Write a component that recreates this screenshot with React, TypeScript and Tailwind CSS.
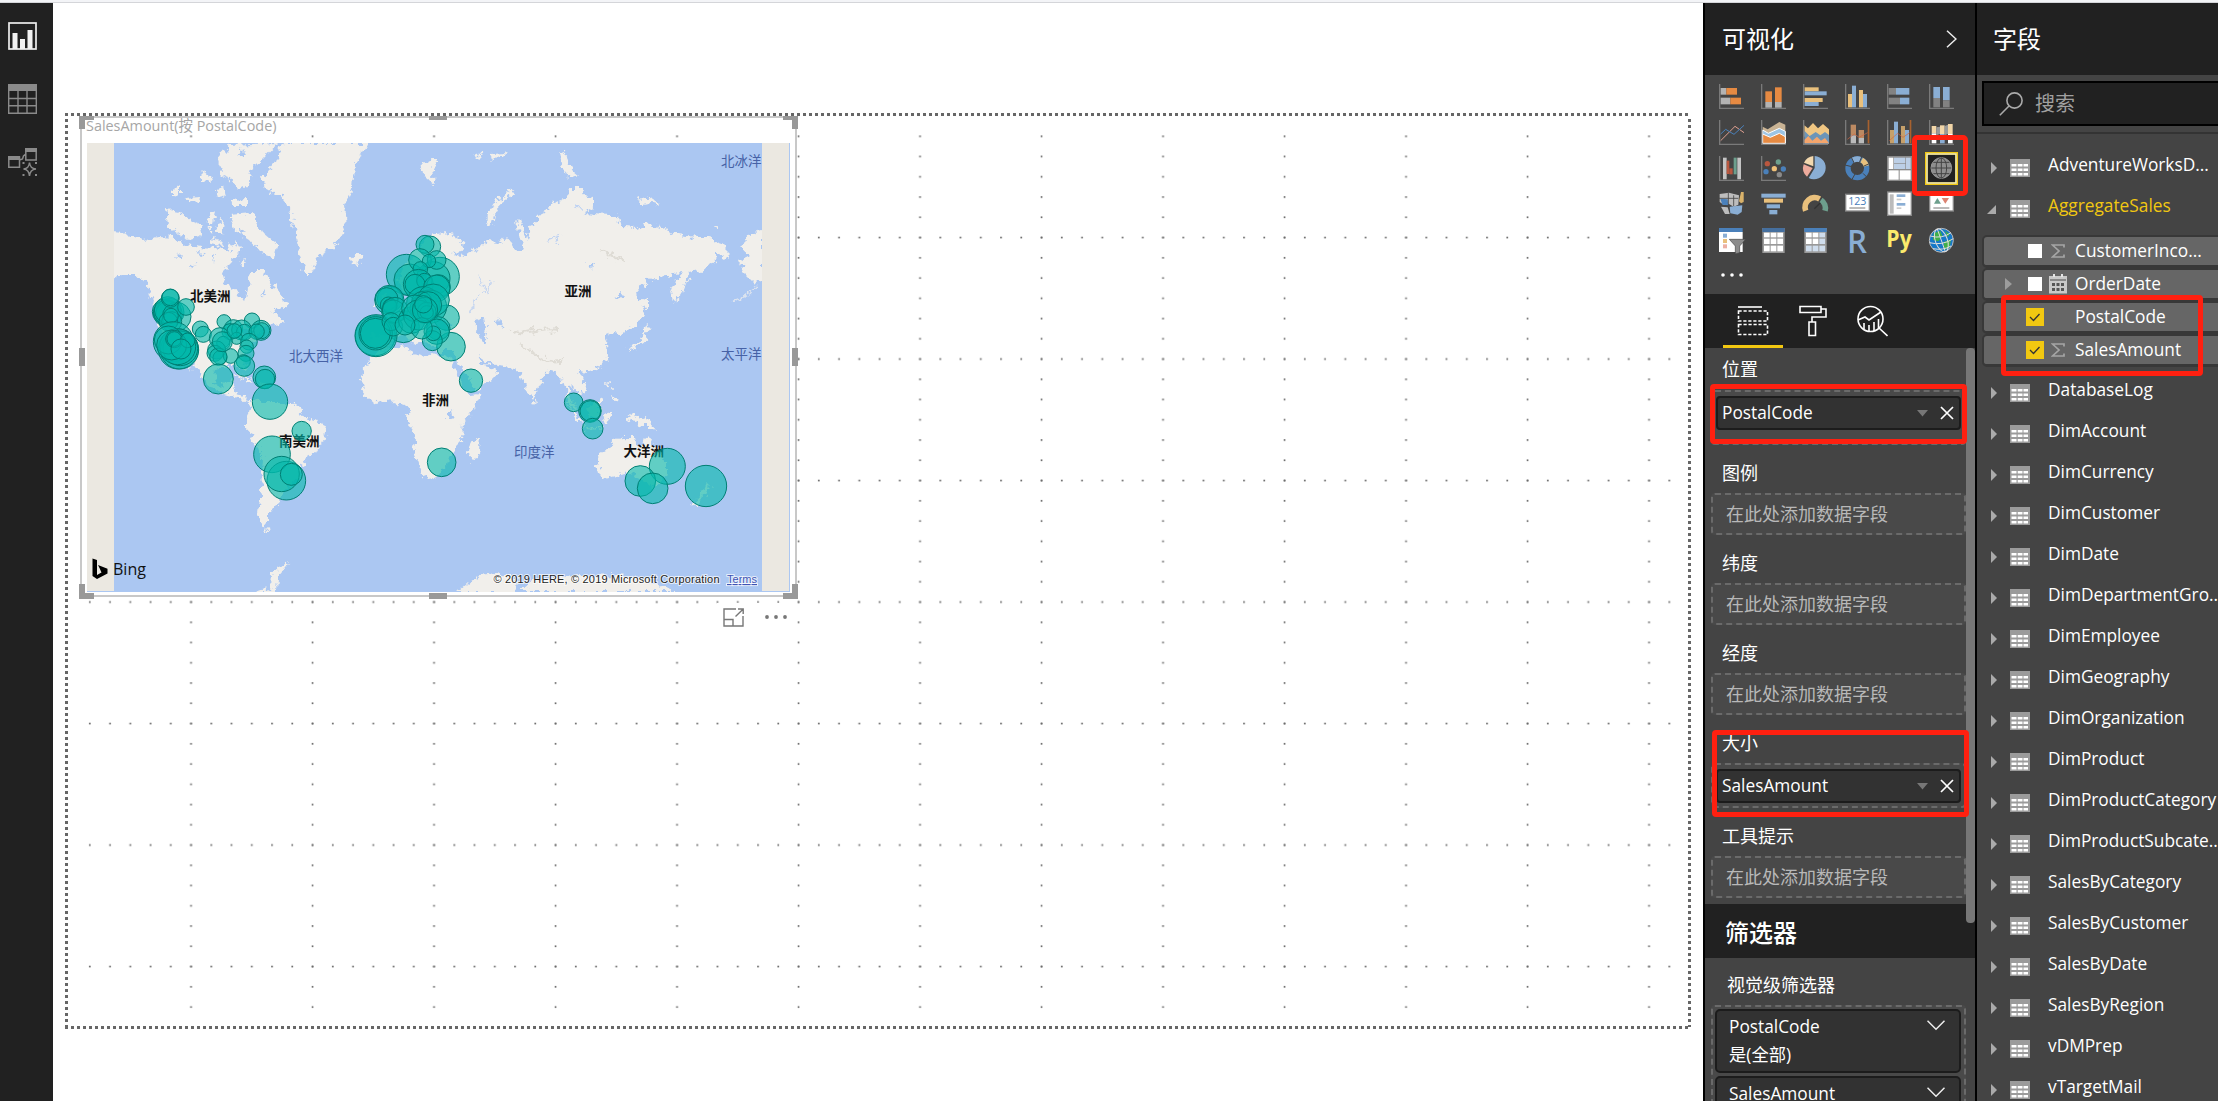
import type { ReactNode } from 'react';

const FONT = "font-['Open_Sans','Noto_Sans_CJK_SC',sans-serif]";

/* ---------- map data ---------- */

const LAND = [
  // North America
  'M114 232L125 233L145 240L158 237L175 238L185 245L200 247L215 248L228 250L235 240L241 250L232 262L222 272L224 284L235 290L245 302L248 288L250 270L262 270L270 282L285 300L288 306L272 312L285 322L275 324L262 328L255 340L246 350L243 360L247 372L240 366L226 366L216 370L214 382L222 388L230 380L235 384L232 392L240 394L245 401L254 399L249 404L242 400L236 396L222 394L208 385L196 366L187 352L193 372L183 358L170 345L160 330L157 312L150 295L147 283L135 275L122 275L114 281Z',
  // Greenland, Iceland
  'M282 143L276 160L262 178L268 192L280 195L290 208L295 232L301 262L306 273L312 273L318 256L335 245L346 226L344 205L353 188L355 165L368 143Z',
  'M351 257L356 254L364 254L365 258L359 263L352 262Z',
  // Arctic Canada
  'M168 210L180 212L190 220L203 225L200 236L188 240L174 230L165 222Z',
  'M218 160L230 145L278 143L262 160L252 168L248 185L238 190L232 180L222 176Z',
  'M230 215L252 213L262 232L277 245L275 258L262 254L250 240L234 230Z',
  'M232 200L246 199L246 206L233 206Z',
  'M172 192L180 186L180 194L172 197Z',
  'M186 197L200 196L199 203L188 202Z',
  'M200 171L208 174L212 182L204 180Z',
  'M208 213L216 210L214 222L209 224ZM218 222L224 220L222 234L216 232ZM216 190L224 188L226 196L218 198Z',
  'M212 238L222 240L220 246L210 244ZM238 262L246 260L244 266ZM206 226L212 228L210 234Z',
  // Cuba and Hispaniola
  'M232 374L243 375L254 382L245 380ZM258 382L268 384L262 387Z',
  // South America
  'M250 404L256 399L262 402L290 402L298 407L303 416L314 420L327 427L324 437L317 451L308 456L303 465L300 475L290 484L283 494L278 501L274 510L268 514L268 522L264 527L259 523L258 513L261 490L263 460L260 450L252 438L246 426L246 420Z',
  'M262 526L270 532L266 532Z',
  // Africa and Madagascar
  'M373 356L377 352L390 348L409 346L411 354L428 357L432 352L450 358L458 377L463 388L470 395L482 394L475 407L463 422L462 441L453 450L448 464L438 477L425 480L418 460L413 450L416 440L408 417L409 410L405 405L390 400L377 404L365 395L361 383L364 368Z',
  'M480 437L479 450L475 460L470 459L469 450L474 440Z',
  // Eurasia
  'M435 233L447 232L463 243L464 252L452 253L458 257L470 252L487 242L502 243L507 237L512 243L517 253L523 250L517 222L520 219L527 240L530 226L538 222L538 215L548 210L552 203L567 197L573 188L583 188L585 195L593 197L593 207L583 213L607 215L617 215L623 227L637 228L647 223L660 227L677 235L697 237L710 237L722 245L730 253L725 258L715 252L717 260L703 270L690 273L683 290L675 303L671 290L675 280L684 272L673 273L667 278L647 280L635 295L642 302L644 313L636 326L628 328L622 335L612 334L604 337L607 343L608 357L600 368L587 373L579 371L586 387L582 395L573 388L568 384L571 398L578 411L570 404L563 383L555 370L548 372L540 383L532 399L525 387L521 373L512 370L507 366L497 365L487 362L477 356L482 365L490 366L498 372L493 378L482 387L475 391L469 380L462 367L455 358L453 350L440 350L430 348L424 340L414 344L405 333L396 336L386 349L373 350L371 336L386 334L381 319L394 313L406 305L417 300L425 290L404 292L398 280L404 266L420 245Z',
  'M384 314L392 312L391 302L386 292L381 296L385 304ZM373 308L381 306L380 300L374 300Z',
  // Arctic islands of Eurasia
  'M420 166L430 160L438 162L432 168L434 184L428 180Z',
  'M474 156L480 153L482 158ZM490 153L508 152L500 158L492 160Z',
  'M559 152L565 150L568 163L573 172L579 177L572 180L562 168Z',
  'M512 190L514 193L500 204L494 216L491 228L487 227L488 213L496 202Z',
  'M638 197L650 199L656 203L662 206L650 204L642 205ZM713 228L718 226L718 229Z',
  // Alaska at the right edge
  'M762 230L750 233L746 242L740 247L750 256L740 262L744 272L752 280L762 283Z',
  // Japan, Philippines, Indonesia
  'M646 325L652 326L646 333L645 342L636 348L627 350L640 341L644 333ZM640 300L648 298L648 312L645 310Z',
  'M607 381L611 388L608 390ZM613 396L619 399L615 402Z',
  'M566 402L576 412L582 424L577 420ZM586 408L600 400L600 414L592 418ZM603 414L612 412L606 424ZM584 427L600 428L602 430L585 429Z',
  'M627 417L634 415L641 418L652 422L656 430L648 426L642 426L634 421Z',
  // Australia, New Zealand, Sri Lanka
  'M597 455L607 450L615 440L623 437L635 437L636 444L643 447L647 434L651 442L658 450L667 462L667 473L660 484L653 487L646 484L640 478L628 473L618 476L602 480L600 473L597 462Z',
  'M706 483L712 489L702 497L697 507L692 504L702 493ZM535 398L538 403L534 402Z',
  // Antarctica
  'M457 592L467 583L480 575L495 573L517 577L514 592ZM520 592L533 580L553 577L620 575L647 580L678 592ZM253 592L264 588L271 590L272 575L281 565L289 562L277 577L276 592Z',
];

const INLAND_WATER = [
  'M476 320L484 318L486 328L484 334L488 341L484 343L479 336Z',
  'M432 326L440 320L452 324L446 330L436 330Z',
  'M495 320L501 318L500 326ZM586 264L594 264L592 269Z',
  'M240 331L250 327L256 332L246 336Z',
  'M615 296L623 294L622 298ZM448 413L452 409L453 417L448 420Z',
  'M212 255L216 252L214 262ZM190 262L196 266L191 267ZM176 256L184 254L180 260Z',
  'M238 155L243 148L246 160ZM262 287L266 292L263 297ZM196 252L204 253L200 256ZM240 228L246 232L244 236Z',
];

type Bubble = [number, number, number];

const AMERICAS_EUROPE: Bubble[] = [
  [60, 260, 38], [66, 265, 41], [75, 262, 42], [72, 268, 40], [62, 262, 36], [68, 255, 40], [95, 275, 43], [80, 290, 30],
  [70, 290, 28], [76, 220, 27], [76, 217, 25], [123, 246, 25], [78, 272, 22],
  [85, 350, 60], [100, 372, 60], [104, 375, 57], [106, 370, 52], [98, 365, 54], [70, 345, 42], [80, 360, 45],
  [88, 342, 26], [88, 342, 22], [128, 346, 22], [108, 372, 30], [166, 312, 24], [175, 328, 24],
  [237, 290, 21], [321, 287, 23], [265, 312, 28], [255, 320, 24], [290, 315, 30], [298, 322, 24], [348, 316, 30],
  [350, 317, 24], [335, 320, 23], [225, 340, 32], [235, 354, 20], [275, 340, 18], [312, 350, 25], [305, 365, 20],
  [215, 375, 27], [210, 385, 24], [225, 398, 21], [257, 393, 22], [220, 395, 26], [303, 385, 24], [295, 410, 21],
  [232, 350, 30], [268, 318, 22], [298, 423, 31], [220, 462, 45], [358, 457, 34], [360, 462, 29],
  [784, 148, 60], [795, 165, 48], [885, 155, 58], [865, 160, 50], [905, 278, 38], [775, 305, 48], [691, 332, 60],
  [693, 332, 63], [692, 325, 50], [691, 325, 45], [918, 365, 43], [855, 65, 32], [840, 58, 27], [825, 105, 34],
  [875, 105, 28], [852, 108, 20], [826, 132, 22], [820, 178, 45], [838, 168, 23], [810, 178, 30], [880, 185, 36],
  [875, 190, 40], [735, 222, 38], [733, 225, 44], [725, 222, 34], [730, 240, 24], [735, 243, 21], [745, 260, 35],
  [750, 255, 38], [738, 290, 27], [745, 305, 28], [800, 285, 40], [835, 235, 50], [840, 250, 45], [855, 245, 50],
  [865, 225, 48], [830, 230, 30], [850, 240, 40], [810, 250, 40], [820, 270, 45], [845, 260, 28], [845, 262, 20],
  [880, 310, 35], [875, 320, 38], [862, 347, 30], [865, 325, 22], [830, 310, 32], [840, 255, 38], [835, 238, 26],
  [780, 300, 30],
];
const SOUTH: Bubble[] = [
  [630, 185, 53], [725, 273, 29], [636, 343, 55], [679, 422, 58], [665, 402, 53], [694, 403, 33], [1145, 367, 43],
  [1233, 122, 35], [1541, 187, 28], [1590, 213, 34], [1591, 213, 31], [1598, 266, 31], [1822, 379, 54],
  [1741, 423, 46], [1778, 445, 46], [1938, 438, 62],
];

function Bubbles({ items, transform }: { items: Bubble[]; transform: string }) {
  return (
    <g transform={transform} fill="#01b8aa" fillOpacity="0.6" stroke="#007e73" strokeWidth="3">
      {items.map(([x, y, r], i) => (
        <circle key={i} cx={x} cy={y} r={r} />
      ))}
    </g>
  );
}

function WorldMap() {
  return (
    <svg viewBox="87 143 703 449" className="block h-[449px] w-[703px]" fontFamily="'Noto Sans CJK SC', sans-serif">
      <defs>
        <filter id="coast" x="-5%" y="-5%" width="110%" height="110%">
          <feTurbulence type="fractalNoise" baseFrequency="0.16" numOctaves="3" seed="4" result="n" />
          <feDisplacementMap in="SourceGraphic" in2="n" scale="11" xChannelSelector="R" yChannelSelector="G" />
        </filter>
        <clipPath id="sea"><rect x="114" y="143" width="648" height="449" /></clipPath>
      </defs>
      <rect x="87" y="143" width="703" height="449" fill="#abc7f2" />
      <rect x="87" y="143" width="27" height="448" fill="#ebe8e1" />
      <g clipPath="url(#sea)">
        <g filter="url(#coast)">
          <path d="M60 250L114 232L114 281L60 280Z" fill="#f1efeb" />
          {LAND.map((d, i) => <path key={i} d={d} fill="#f1efeb" />)}
          {INLAND_WATER.map((d, i) => <path key={i} d={d} fill="#abc7f2" />)}
          <path d="M757 287L745 296L732 301" stroke="#dde4ef" strokeWidth="1.5" fill="none" />
          <path d="M520 345Q530 350 540 357T565 360M530 332Q545 328 560 330M512 333L535 328M600 250L625 262" stroke="#dedbd4" strokeWidth="2" fill="none" />
          <path d="M478 278L486 290L476 300L470 314M492 280L488 294" stroke="#c6d6f0" strokeWidth="1.5" fill="none" />
          <path d="M548 240L560 236L556 244M572 207L584 208" stroke="#c0d3f2" strokeWidth="1.5" fill="none" />
        </g>
      </g>
      <rect x="762" y="143" width="27" height="448" fill="#ebe8e1" />
      <g fill="#111" fontSize="13.5" fontWeight="700">
        <text x="190" y="301">北美洲</text>
        <text x="564.500" y="296">亚洲</text>
        <text x="422" y="405">非洲</text>
        <text x="279" y="446">南美洲</text>
        <text x="623.500" y="456">大洋洲</text>
      </g>
      <g fill="#4662a6" fontSize="13.5">
        <text x="289" y="361">北大西洋</text>
        <text x="721" y="166">北冰洋</text>
        <text x="721" y="359">太平洋</text>
        <text x="514" y="457">印度洋</text>
      </g>
      <Bubbles items={AMERICAS_EUROPE} transform="translate(145 225) scale(0.33333)" />
      <Bubbles items={SOUTH} transform="translate(60 340) scale(0.33333)" />
      <path d="M92.500 558.500L97 560V575L101.500 572.500L99.500 568L98 565L107.500 568.800V573.500L97 579L92.500 576Z" fill="#000" />
      <text x="113" y="575" fontSize="17" textLength="33" lengthAdjust="spacingAndGlyphs" fontFamily="'Open Sans', sans-serif" fill="#111">Bing</text>
      <g fontFamily="'Liberation Sans', sans-serif" fontSize="11" stroke="#fff" strokeOpacity="0.7" strokeWidth="2" paintOrder="stroke">
        <text x="493.500" y="583" textLength="226" fill="#222">© 2019 HERE, © 2019 Microsoft Corporation</text>
        <text x="727" y="583" textLength="30" fill="#3f54b5" textDecoration="underline">Terms</text>
      </g>
    </svg>
  );
}

/* ---------- report canvas ---------- */

function CanvasGrid() {
  const ticks = [0, 20.25, 40.5, 60.75, 81, 101.25];
  return (
    <svg className="absolute inset-0 h-full w-full" viewBox="53 3 1650 1098">
      <defs>
        <pattern id="grid" x="67" y="114.500" width="121.500" height="121.500" patternUnits="userSpaceOnUse">
          {ticks.map((t) => (
            <g key={t} fill="#6a6a6a">
              <rect x={t + 1.7} y="0.700" width="1.700" height="1.700" />
              <rect x="1.700" y={t + 0.7} width="1.700" height="1.700" />
            </g>
          ))}
        </pattern>
      </defs>
      <rect x="72" y="118" width="1614" height="905" fill="url(#grid)" />
      <g stroke="#666" strokeWidth="3" strokeDasharray="3 3">
        <path d="M65 114.500H1691M65 1027.500H1691M66.500 119V1027M1689.500 119V1027" />
      </g>
    </svg>
  );
}

function ReportCanvas() {
  return (
    <main className="relative w-[1650px] shrink-0 bg-white">
      <CanvasGrid />
      <section className="absolute left-[27px] top-[113px] h-[481px] w-[717px]">
        <div className="absolute inset-0 border-2 border-[#c8c8c8]" />
        <div className="flex h-full flex-col pl-[7px]">
          <h2 className={`${FONT} -ml-px h-[27px] w-[192px] whitespace-nowrap text-[14.4px] leading-[20px] text-[#a6a6a6]`}>SalesAmount(按 PostalCode)</h2>
          <WorldMap />
        </div>
        <svg className="absolute -left-px top-0 h-[483px] w-[720px]" viewBox="0 0 720 483" fill="#999">
          <path d="M0 0H15V4H6V13H0ZM704 0H719V13H713V4H704ZM0 468H6V477H15V483H0ZM713 468H719V483H704V477H713ZM350 0H368V4H350ZM350 477H368V483H350ZM0 232H6V250H0ZM713 232H719V250H713Z" />
        </svg>
      </section>
      <div className="absolute left-[664px] top-[600px] flex h-[28px] w-[78px] items-center gap-[21px] bg-white pl-[6px]">
        <svg viewBox="0 0 21 19" className="h-[19px] w-[21px]" fill="none" stroke="#777" strokeWidth="1.400">
          <path d="M13 1H1V18H20V8M1 11.500H10V18M12.500 8.500L20 1.300M15 1H20.200V6" />
        </svg>
        <svg viewBox="0 0 22 4" className="h-1 w-[22px]" fill="#777">
          <circle cx="2" cy="2" r="1.900" /><circle cx="11" cy="2" r="1.900" /><circle cx="20" cy="2" r="1.900" />
        </svg>
      </div>
    </main>
  );
}

/* ---------- left rail ---------- */

function Rail() {
  return (
    <nav className="flex w-[53px] shrink-0 flex-col gap-[34px] bg-[#212121] pl-2 pt-[19px]">
      <svg viewBox="0 0 29 28" className="h-7 w-[29px]">
        <rect x="1" y="1" width="27" height="26" fill="none" stroke="#eee" strokeWidth="1.700" />
        <path d="M4.500 11H9.500V27H4.500ZM12 17H17V27H12ZM19.500 8H24.500V27H19.500Z" fill="#f2f2f2" />
      </svg>
      <svg viewBox="0 0 29 30" className="h-[30px] w-[29px]">
        <path d="M0 0H29V7H0Z" fill="#8a8a8a" />
        <path d="M.7 7V29.300H28.300V7M.7 14.500H28.300M.7 21.800H28.300M10 7V29M19 7V29" fill="none" stroke="#8a8a8a" strokeWidth="1.400" />
      </svg>
      <svg viewBox="0 0 30 29" className="h-[29px] w-[30px]" fill="none" stroke="#8a8a8a" strokeWidth="1.500">
        <path d="M.8 9V19.300H11.500V9ZM17.800 1V12H28.200V1ZM11.500 12L14.500 11L15.500 8L17.800 6" />
        <path d="M0 8H12V12H0ZM17 0H29V4H17Z" fill="#8a8a8a" stroke="none" />
        <path d="M21.500 14.500Q22 20.500 28 21Q22 21.500 21.500 28Q21 21.500 15.500 21Q21 20.500 21.500 14.500Z" />
        <path d="M14.500 14h2v2h-2ZM27 14h2v2h-2ZM14.500 26h2v2h-2ZM27 26h2v2h-2Z" fill="#8a8a8a" stroke="none" />
      </svg>
    </nav>
  );
}

/* ---------- visual type icons ---------- */

const OR = '#e68a42', GR = '#b3b3b3', BL = '#8aaed4', YE = '#e9c07c', DG = '#828282', DB = '#4a80ba', GN = '#6d9f8d', RD = '#b9573f', AX = '#7a7a7a';

function Bars({ b }: { b: [number, number, number, number, string][] }) {
  return <>{b.map(([x, y, w, h, f], i) => <rect key={i} x={x} y={y} width={w} height={h} fill={f} />)}</>;
}
const Axis = () => <path d="M2 0V73H75" fill="none" stroke={AX} strokeWidth="4" />;

const VISUALS: ReactNode[] = [
  <><Axis /><Bars b={[[5, 12, 17, 20, GR], [22, 12, 32, 20, OR], [5, 41, 29, 20, GR], [34, 41, 32, 20, OR]]} /></>,
  <><Axis /><Bars b={[[13, 22, 20, 32, OR], [13, 54, 20, 17, GR], [42, 10, 20, 44, OR], [42, 54, 20, 17, GR]]} /></>,
  <><Axis /><Bars b={[[5, 10, 42, 12, YE], [5, 22, 66, 12, BL], [5, 42, 54, 12, YE], [5, 54, 42, 12, BL]]} /></>,
  <><Axis /><Bars b={[[9, 30, 12, 40, YE], [21, 5, 12, 65, BL], [42, 18, 12, 52, YE], [54, 30, 12, 40, BL]]} /></>,
  <><Axis /><Bars b={[[5, 12, 22, 20, DG], [27, 12, 40, 20, BL], [5, 41, 34, 20, DG], [39, 41, 28, 20, BL]]} /></>,
  <><Axis /><Bars b={[[13, 9, 20, 33, BL], [13, 42, 20, 28, DG], [42, 9, 20, 40, BL], [42, 49, 20, 21, DG]]} /></>,

  <><Axis /><path d="M5 62L48 19L75 38" fill="none" stroke="#e0a091" strokeWidth="3" /><path d="M5 42L20 28L45 43L75 16" fill="none" stroke={DB} strokeWidth="3" /></>,
  <><path d="M5 20L20 28L55 6L73 14V70H5Z" fill="#c9b394" /><path d="M5 30L22 40L55 25L73 34V70H5Z" fill="#9cc4e4" stroke="#fff" strokeWidth="3" /><path d="M5 42L28 52L55 40L73 50V70H5Z" fill={OR} stroke="#fff" strokeWidth="3" /><Axis /></>,
  <><path d="M4 16L15 25L30 9L45 25L60 12L78 28V50H4Z" fill="#f0c682" /><path d="M4 32L20 48L38 36L52 46L66 36L78 45V72H4Z" fill="#6c95b8" /><path d="M4 60L16 48L28 62L42 50L54 62L66 54L78 70H4Z" fill="#f4a56c" /><Axis /></>,
  <><Axis /><Bars b={[[17, 14, 16, 32, '#bd8a62'], [17, 46, 16, 24, '#bbb'], [41, 30, 16, 24, '#bd8a62'], [41, 54, 16, 16, '#bbb'], [68, 0, 5, 70, '#a8622f']]} /><path d="M7 58L28 42L42 52L68 38" fill="none" stroke="#d2643f" strokeWidth="2" /></>,
  <><Axis /><Bars b={[[9, 30, 12, 40, '#c6a06a'], [21, 5, 12, 65, BL], [42, 18, 12, 52, '#c6a06a'], [54, 30, 12, 40, BL], [68, 0, 5, 70, '#a8622f']]} /><path d="M7 62L32 40L48 52L68 38" fill="none" stroke="#d2643f" strokeWidth="2" /></>,
  <><Axis /><Bars b={[[8, 18, 14, 22, '#f2d6a8'], [8, 40, 14, 30, '#fff'], [33, 16, 14, 26, '#f2d6a8'], [33, 42, 14, 28, BL], [57, 12, 14, 30, '#f2d6a8'], [57, 42, 14, 28, '#fff']]} /><path d="M22 22L33 20V42L22 46ZM47 18L57 14V42L47 46Z" fill="#999" /></>,

  <><Bars b={[[12, 5, 11, 65, '#c4c4c4'], [23, 14, 8, 40, RD], [31, 37, 10, 18, RD], [44, 5, 9, 50, GN], [55, 5, 11, 65, '#c4c4c4']]} /><Axis /></>,
  <><Axis /><circle cx="19" cy="23" r="8" fill={RD} /><circle cx="52" cy="18" r="8" fill={GN} /><circle cx="15" cy="47" r="8" fill={DB} /><circle cx="40" cy="38" r="8" fill="#f0c078" /><circle cx="67" cy="39" r="8" fill={DB} /><circle cx="55" cy="56" r="8" fill="#8a8a8a" /></>,
  <><path d="M35 36V0A35 35 0 1 1 17 66Z" fill={BL} /><path d="M31 31V0A36 36 0 0 0 3 20Z" fill="#f2d8ae" /><path d="M29 36L2 25A34 34 0 0 0 12 62Z" fill="#ecaa9c" /></>,
  <g fill="none" strokeWidth="16"><circle cx="37" cy="37" r="28" stroke={DB} /><path d="M23 13A28 28 0 0 1 47 11" stroke={BL} /><path d="M50 12A28 28 0 0 1 64 30" stroke={YE} /><g stroke="#444" strokeWidth="3"><path d="M28 22L17 0M43 20L51 0M55 31L75 22M54 52L66 64M30 54L20 72M20 32L0 27" /></g></g>,
  <><rect width="75" height="75" fill="#8a8a8a" /><Bars b={[[5, 5, 14, 34, '#fff'], [21, 5, 34, 17, '#bccfe6'], [21, 24, 34, 15, '#bccfe6'], [57, 5, 14, 34, '#bccfe6'], [5, 43, 30, 28, '#fff'], [38, 43, 33, 28, '#fff']]} /></>,
  <g fill="none"><rect x="-10" y="-10" width="95" height="95" fill="#212121" stroke="#f2c811" strokeWidth="4" /><rect x="-6" y="-6" width="87" height="87" stroke="#fff3a6" strokeWidth="5" /><circle cx="37" cy="36" r="31" fill="#8f8f8f" stroke="#999" strokeWidth="3" /><g stroke="#444" strokeWidth="3"><ellipse cx="37" cy="36" rx="16" ry="30" /><path d="M37 5V67M7 36H67M13 19H61M13 53H61" /></g></g>,

  <><path d="M2 6L30 2L60 10L58 38L44 44L30 36L14 38L2 30Z" fill="#bdbdbd" /><path d="M4 20L26 22L28 40L10 38Z" fill={DB} /><path d="M32 44L70 40L68 60L56 68L34 64Z" fill={BL} /><path d="M66 0H74V30L66 34L60 28Z" fill="#d9b26a" /><path d="M6 44L26 46L32 66H18Z" fill="#bdbdbd" /><path d="M0 19H58M28 2V38M2 41L34 42M44 10V42" stroke="#444" strokeWidth="2.500" fill="none" /></>,
  <Bars b={[[1, 5, 73, 12, BL], [9, 20, 57, 12, YE], [17, 37, 40, 12, BL], [25, 54, 24, 13, BL]]} />,
  <g fill="none" strokeWidth="17"><path d="M8 56A29 29 0 0 1 50 21" stroke={YE} /><path d="M54 24A29 29 0 0 1 66 56" stroke={GN} /><path d="M34 50L52 32" stroke="#333" strokeWidth="4" /></g>,
  <><rect x="2" y="7" width="71" height="50" fill="#fff" stroke="#888" strokeWidth="4" /><text x="37" y="38" textAnchor="middle" fontSize="32" fontFamily="Open Sans" fill={DB}>123</text><path d="M13 48H61" stroke="#777" strokeWidth="3" /></>,
  <><rect x="2" y="0" width="71" height="70" fill="#fff" stroke="#888" strokeWidth="4" /><Bars b={[[8, 7, 12, 58, '#bbb'], [29, 7, 26, 8, BL], [29, 20, 14, 5, '#ccc'], [29, 33, 26, 8, BL], [29, 46, 14, 5, '#ccc']]} /></>,
  <><rect x="2" y="7" width="71" height="50" fill="#fff" stroke="#888" strokeWidth="4" /><path d="M15 35L25 18L36 35Z" fill={GN} /><path d="M38 18H60L49 35Z" fill="#dc8371" /><path d="M13 48H61" stroke="#777" strokeWidth="3" /></>,

  <><Bars b={[[0, 0, 71, 12, DB], [0, 12, 71, 60, '#fff'], [12, 17, 12, 12, BL], [12, 33, 12, 12, YE], [12, 49, 12, 12, '#ecb0a4']]} /><path d="M31 34H80L62 54V74L49 78V54Z" fill="#8c8c8c" stroke="#444" strokeWidth="2" /></>,
  <><Bars b={[[4, 0, 67, 75, '#999'], [4, 0, 67, 12, '#456f9e'], [9, 14, 17, 14, '#fff'], [29, 14, 17, 14, '#fff'], [49, 14, 17, 14, '#fff'], [9, 32, 17, 16, '#fff'], [29, 32, 17, 16, '#fff'], [49, 32, 17, 16, '#fff'], [9, 53, 17, 17, '#fff'], [29, 53, 17, 17, '#fff'], [49, 53, 17, 17, '#fff']]} /></>,
  <><Bars b={[[4, 0, 67, 75, '#999'], [4, 0, 67, 12, DB], [9, 14, 17, 14, '#fff'], [29, 14, 17, 14, '#fff'], [49, 14, 17, 14, '#cfdded'], [9, 32, 17, 16, '#fff'], [29, 32, 17, 16, '#fff'], [49, 32, 17, 16, '#cfdded'], [9, 53, 17, 17, '#cfdded'], [29, 53, 17, 17, '#cfdded'], [49, 53, 17, 17, '#cfdded']]} /></>,
  <text x="6" y="74" fontSize="98" fontWeight="600" textLength="60" lengthAdjust="spacingAndGlyphs" fontFamily="Open Sans" fill={BL}>R</text>,
  <text x="-2" y="56" fontSize="68" fontWeight="700" textLength="76" lengthAdjust="spacingAndGlyphs" fontFamily="Open Sans" fill="#fcea6c">Py</text>,
  <><circle cx="37" cy="37" r="36" fill="#1678c8" /><path d="M14 16L34 8L40 24L28 40L12 36ZM44 42L66 34L62 58L46 66ZM48 8L62 18L56 28Z" fill="#3fae49" /><g fill="none" stroke="#ddd" strokeWidth="3"><circle cx="37" cy="37" r="36" stroke="#bbb" /><ellipse cx="37" cy="37" rx="18" ry="36" transform="rotate(-20 37 37)" /><path d="M4 24Q38 34 66 14M1 44Q40 54 73 32M12 62Q42 68 66 54M25 3L49 71" /></g></>,
];

function VisualGallery() {
  return (
    <div className="h-[219px] shrink-0 bg-[#444] pl-[14px] pt-[9px]">
      <div className="grid auto-rows-[36px] grid-cols-[repeat(6,42px)]">
        {VISUALS.map((v, i) => (
          <svg key={i} viewBox="0 0 75 75" className="h-[25px] w-[25px] overflow-visible">{v}</svg>
        ))}
      </div>
      <svg viewBox="0 0 24 4" className="ml-px mt-[9px] h-1 w-6" fill="#fff">
        <circle cx="3" cy="2" r="1.800" /><circle cx="12" cy="2" r="1.800" /><circle cx="21" cy="2" r="1.800" />
      </svg>
    </div>
  );
}

/* ---------- visualizations pane ---------- */

function PaneTabs() {
  return (
    <div className="relative flex h-[54px] shrink-0 bg-[#212121] pl-[32px] pt-[11px]">
      <svg viewBox="0 0 32 32" className="h-8 w-8" fill="none" stroke="#fff" strokeWidth="1.600">
        <path d="M1 2H25" /><path d="M1.500 6H30.500V16H1.500ZM1.500 19.500H30.500V29.500H1.500Z" strokeDasharray="3.200 1.800" />
      </svg>
      <svg viewBox="0 0 28 32" className="ml-[30px] h-8 w-7" fill="none" stroke="#fff" strokeWidth="1.600">
        <path d="M1 1.500H22V7.500H1ZM22 4H27V12H13V17M10 17H16.500V30.500H10Z" />
      </svg>
      <svg viewBox="0 0 31 32" className="ml-[30px] h-8 w-[31px]" fill="none" stroke="#fff" strokeWidth="1.600">
        <circle cx="13.500" cy="14" r="12.500" /><path d="M22 23L30.500 31M1 15L8 12L12 15L24 7M7 18V24M12 20V26M17 17V26M21.500 14V23" />
      </svg>
      <div className="absolute bottom-0 left-[18px] h-[3px] w-[60px] bg-[#f2c811]" />
    </div>
  );
}

function Label({ children, first }: { children: ReactNode; first?: boolean }) {
  return <div className={first ? 'flex h-[42px] items-center pl-[17px] text-[18px]' : 'flex h-12 items-center pl-[17px] pt-2 text-[18px]'}>{children}</div>;
}
function EmptyWell() {
  return (
    <div className="ml-1.5 flex h-[42px] w-[255px] items-center rounded-[4px] border-2 border-dashed border-[#6a6a6a] bg-[#494949] pl-[13px] text-[18px] text-[#b8b8b8]">
      在此处添加数据字段
    </div>
  );
}
function FilledWell({ name, tall }: { name: string; tall?: boolean }) {
  return (
    <div className={tall ? 'ml-1.5 h-[55px] w-[255px] rounded-[4px] border-2 border-dashed border-[#6a6a6a] bg-[#494949] pl-[3px] pt-1' : 'ml-1.5 h-[45px] w-[255px] rounded-[4px] border-2 border-dashed border-[#6a6a6a] bg-[#494949] pl-[3px] pt-1'}>
      <div className="flex h-[34px] w-[245px] items-center rounded-[4px] border-2 border-[#1c1c1c] bg-[#323232] pl-1 pr-[5px]">
        <span className="grow">{name}</span>
        <svg viewBox="0 0 11 7" className="mr-3 h-[7px] w-[11px]"><path d="M0 0H11L5.500 6.500Z" fill="#777" /></svg>
        <svg viewBox="0 0 14 14" className="h-[14px] w-[14px]"><path d="M1 1L13 13M13 1L1 13" stroke="#fff" strokeWidth="1.700" /></svg>
      </div>
    </div>
  );
}
const Chevron = () => (
  <svg viewBox="0 0 18 11" className="mt-[7px] h-[11px] w-[18px] shrink-0" fill="none" stroke="#eee" strokeWidth="1.500"><path d="M.5 .8L9 9.300L17.500 .8" /></svg>
);

function VisualizationsPane() {
  return (
    <aside className="relative flex w-[274px] shrink-0 flex-col overflow-hidden border-l-2 border-r-2 border-black bg-[#444] text-[17.3px] text-white">
      <header className="flex h-[72px] shrink-0 items-center justify-between bg-[#212121] pl-[17px] pr-[18px] text-[24px]">
        <span>可视化</span>
        <svg viewBox="0 0 11 18" className="h-[18px] w-[11px]" fill="none" stroke="#eee" strokeWidth="1.500"><path d="M1 .8L10 9L1 17.200" /></svg>
      </header>
      <VisualGallery />
      <PaneTabs />
      <div className="flex h-[556px] shrink-0 flex-col leading-[22px]">
        <Label first>位置</Label>
        <FilledWell name="PostalCode" tall />
        <Label>图例</Label>
        <EmptyWell />
        <Label>纬度</Label>
        <EmptyWell />
        <Label>经度</Label>
        <EmptyWell />
        <Label>大小</Label>
        <FilledWell name="SalesAmount" />
        <Label>工具提示</Label>
        <EmptyWell />
      </div>
      <div className="flex h-[54px] shrink-0 items-center bg-[#212121] pl-[20px] pt-1 text-[24px] font-medium">筛选器</div>
      <div className="flex h-[47px] shrink-0 items-center pl-[22px] pt-2 text-[18px]">视觉级筛选器</div>
      <div className="ml-1.5 flex w-[255px] shrink-0 flex-col gap-[3px] rounded-t-[4px] border-2 border-dashed border-[#6a6a6a] bg-[#494949] pl-[2px] pt-[2px]">
        <div className="flex h-[64px] w-[246px] justify-between rounded-[5px] border-2 border-[#1c1c1c] bg-[#323232] pl-3 pr-3.5 pt-0.5 leading-[28px]">
          <div><p>PostalCode</p><p>是(全部)</p></div>
          <Chevron />
        </div>
        <div className="flex h-[64px] w-[246px] justify-between rounded-[5px] border-2 border-[#1c1c1c] bg-[#323232] pl-3 pr-3.5 pt-0.5 leading-[28px]">
          <p>SalesAmount</p>
          <Chevron />
        </div>
      </div>
      <div className="absolute right-0 top-[345px] h-[575px] w-[9px] rounded-[4px] bg-[#777]" />
    </aside>
  );
}

/* ---------- fields pane ---------- */

const TABLES = ['DatabaseLog', 'DimAccount', 'DimCurrency', 'DimCustomer', 'DimDate', 'DimDepartmentGro...', 'DimEmployee', 'DimGeography', 'DimOrganization', 'DimProduct', 'DimProductCategory', 'DimProductSubcate...', 'SalesByCategory', 'SalesByCustomer', 'SalesByDate', 'SalesByRegion', 'vDMPrep', 'vTargetMail'];

function TableRow({ name, open }: { name: string; open?: boolean }) {
  return (
    <div className={open ? 'flex h-[41px] shrink-0 items-center text-[#f2c811]' : 'flex h-[41px] shrink-0 items-center'}>
      <svg viewBox="0 0 10 12" className="ml-[10px] h-3 w-[10px] shrink-0" fill="#aaa">
        {open ? <path d="M9 2V11H0Z" /> : <path d="M4 0L10 6L4 12Z" />}
      </svg>
      <svg viewBox="0 0 20 18" className="ml-[13px] h-[18px] w-5 shrink-0">
        <rect width="20" height="18" fill="#9b9b9b" />
        <path d="M1.500 5H6.500V7.500H1.500ZM7.700 5H12.500V7.500H7.700ZM13.500 5H18V7.500H13.500ZM1.500 9.500H6.500V12H1.500ZM7.700 9.500H12.500V12H7.700ZM13.500 9.500H18V12H13.500ZM1.500 14H6.500V16.500H1.500ZM7.700 14H12.500V16.500H7.700ZM13.500 14H18V16.500H13.500Z" fill="#fff" />
      </svg>
      <span className="ml-[18px] whitespace-nowrap pb-[5px]">{name}</span>
    </div>
  );
}

const Sigma = () => (
  <svg viewBox="0 0 14 14" className="h-[14px] w-[14px]" fill="none" stroke="#a5a5a5" strokeWidth="1.700"><path d="M13 3.500V1H1.500L8 7L1.500 13H13V10.500" /></svg>
);
const Calendar = () => (
  <svg viewBox="0 0 18 20" className="h-5 w-[18px]">
    <path d="M0 2H18V19.500H0Z" fill="#c9c9c9" /><path d="M4 0H6V3H4ZM12 0H14V3H12Z" fill="#e5e5e5" /><path d="M1 6H17" stroke="#666" strokeWidth="1.300" />
    <path d="M3 9H6V12H3ZM7.500 9H10.500V12H7.500ZM12 9H15V12H12ZM3 14H6V17H3ZM7.500 14H10.500V17H7.500ZM12 14H15V17H12Z" fill="#555" />
  </svg>
);

function FieldRow({ name, icon, checked, expandable }: { name: string; icon?: ReactNode; checked?: boolean; expandable?: boolean }) {
  return (
    <div className="mr-[-8px] flex h-[33px] shrink-0 items-center rounded-[5px] border-2 border-b-[3px] border-[#383838] bg-[#666]">
      <div className="flex w-[43px] shrink-0 pl-[21px]">
        {expandable && <svg viewBox="0 0 7 12" className="h-3 w-[7px]" fill="#9d9d9d"><path d="M0 0L7 6L0 12Z" /></svg>}
      </div>
      {checked ? (
        <svg viewBox="0 0 18 18" className="-ml-[1px] h-[18px] w-[18px] shrink-0"><rect width="18" height="18" fill="#f2c811" /><path d="M4 9L7.500 12.500L13.500 6" fill="none" stroke="#333" strokeWidth="1.300" /></svg>
      ) : (
        <span className="ml-px mr-[2px] h-[14px] w-[14px] shrink-0 bg-white" />
      )}
      <span className="ml-[3px] flex w-[22px] shrink-0 justify-center">{icon}</span>
      <span className="ml-[6px] whitespace-nowrap">{name}</span>
    </div>
  );
}

function FieldsPane() {
  return (
    <aside className="relative flex min-w-0 grow flex-col overflow-hidden bg-[#444] text-[17.3px] leading-[24px] text-white">
      <header className="flex h-[72px] shrink-0 items-center bg-[#212121] pl-[16px] text-[24px]">字段</header>
      <div className="ml-[5px] mt-[6px] flex h-[45px] shrink-0 items-center gap-3 border-2 border-r-0 border-black bg-[#212121] pl-[15px] text-[20px] text-[#a0a0a0]">
        <svg viewBox="0 0 24 24" className="h-6 w-6" fill="none" stroke="#aaa" strokeWidth="1.600"><circle cx="15.500" cy="8.500" r="7.600" /><path d="M10 14L.8 23.200" /></svg>
        <span>搜索</span>
      </div>
      <div className="mt-[6px] h-[2px] shrink-0 bg-[#333]" />
      <div className="flex flex-col pt-[13px]">
        <TableRow name="AdventureWorksD..." />
        <TableRow name="AggregateSales" open />
        <div className="mb-[5px] ml-[5px] mt-[6px] flex flex-col">
          <FieldRow name="CustomerInco..." icon={<Sigma />} />
          <FieldRow name="OrderDate" icon={<Calendar />} expandable />
          <FieldRow name="PostalCode" checked />
          <FieldRow name="SalesAmount" icon={<Sigma />} checked />
        </div>
        {TABLES.map((t) => <TableRow key={t} name={t} />)}
      </div>
    </aside>
  );
}

/* ---------- annotation frames ---------- */

function Highlights() {
  const frame = 'pointer-events-none absolute border-[5px] border-[#ff2010]';
  return (
    <>
      <div className={`${frame} left-[1912px] top-[135px] h-[61px] w-[56px] rounded-[5px]`} />
      <div className={`${frame} left-[1710px] top-[384px] h-[60px] w-[257px] rounded-[4px]`} />
      <div className={`${frame} left-[1712px] top-[730px] h-[87px] w-[257px] rounded-[4px]`} />
      <div className={`${frame} left-[2001px] top-[295px] h-[81px] w-[202px] rounded-[4px]`} />
    </>
  );
}

export default function App() {
  return (
    <div className={`${FONT} relative flex h-[1101px] w-[2218px] flex-col overflow-hidden bg-white`}>
      <div className="h-[3px] shrink-0 border-b border-[#d4d5d9] bg-[#f3f4f7]" />
      <div className="flex min-h-0 grow">
        <Rail />
        <ReportCanvas />
        <VisualizationsPane />
        <FieldsPane />
      </div>
      <Highlights />
    </div>
  );
}
